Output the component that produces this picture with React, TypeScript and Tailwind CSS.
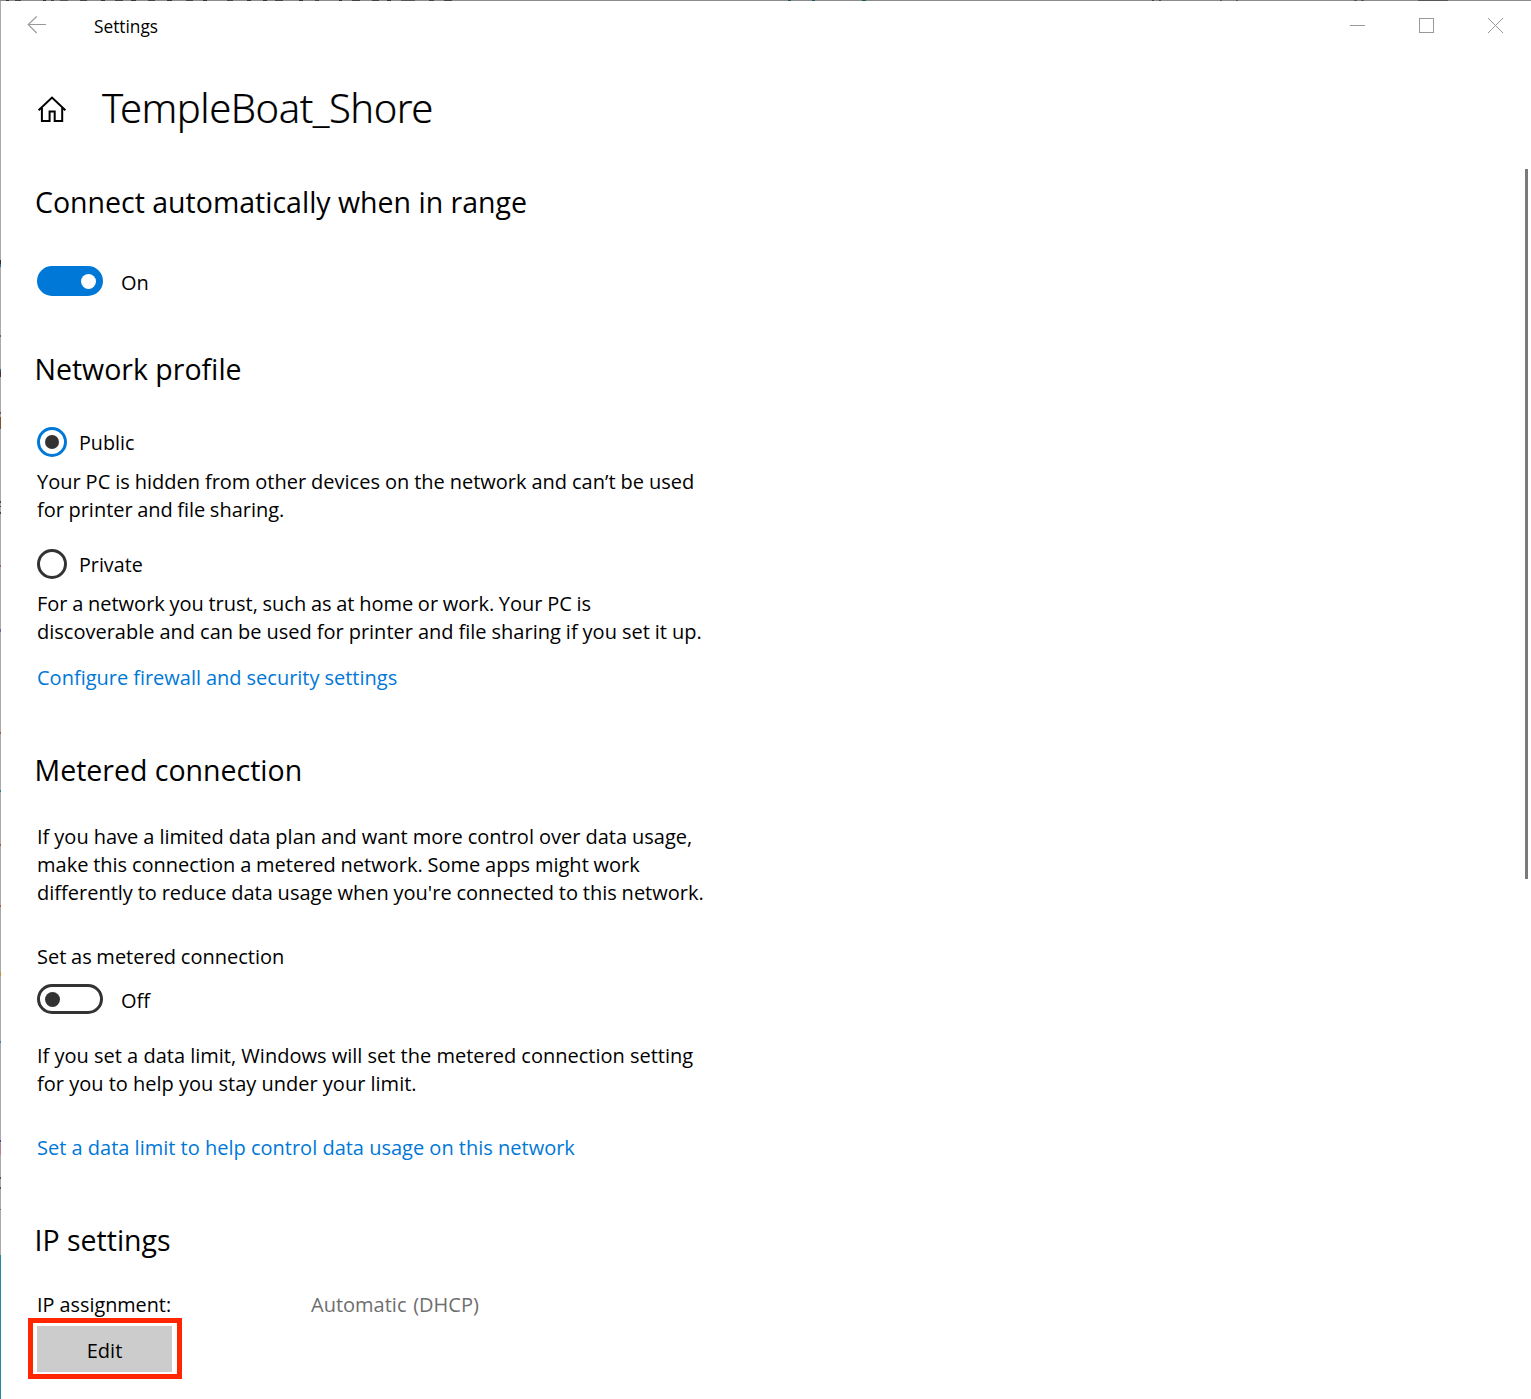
import React, { useState } from "react";

const body = "whitespace-nowrap text-[20px] leading-[28px]";

function Heading({ children, className }: { children: React.ReactNode; className: string }) {
  return <h2 className={`h-10 whitespace-nowrap text-[28.5px] leading-[40px] ${className}`}>{children}</h2>;
}

function Toggle({ on, onChange, label }: { on: boolean; onChange: () => void; label: string }) {
  return (
    <button
      role="switch"
      aria-checked={on}
      aria-label={label}
      onClick={onChange}
      className={`flex h-[30px] w-[66px] items-center rounded-full border-[3px] px-[5px] ${
        on ? "justify-end border-[#0078d7] bg-[#0078d7] pr-[4px]" : "justify-start border-[#333333] bg-white"
      }`}
    >
      <span className={`h-[15px] w-[15px] rounded-full ${on ? "bg-white" : "bg-[#333333]"}`} />
    </button>
  );
}

function Radio({ checked, onSelect, label }: { checked: boolean; onSelect: () => void; label: string }) {
  return (
    <button role="radio" aria-checked={checked} onClick={onSelect} className="flex h-[30px] items-center">
      <span
        className={`flex h-[30px] w-[30px] items-center justify-center rounded-full border-[3px] ${
          checked ? "border-[#0078d7]" : "border-[#333333]"
        }`}
      >
        {checked && <span className="h-[14px] w-[14px] rounded-full bg-[#333333]" />}
      </span>
      <span className="ml-3 mt-[2px] whitespace-nowrap text-[19.7px] leading-[28px]">{label}</span>
    </button>
  );
}

function TitleBar() {
  return (
    <header className="flex h-[50px] items-start">
      <svg className="ml-[26px] mt-[15px]" width="20" height="18" viewBox="0 0 20 18" fill="none" stroke="#999999" strokeWidth="1.1">
        <path d="M19 8.5H1.2M9.7 0.5L1.2 8.5L9.7 17" />
      </svg>
      <span className="ml-[47px] mt-[14px] text-[17.3px] leading-[24px]">Settings</span>
      <div className="ml-auto mr-[27px] mt-[16px] flex gap-[53px] text-[#999999]">
        <svg width="16" height="16" viewBox="0 0 16 16" stroke="currentColor" shapeRendering="crispEdges">
          <path d="M0 8.5H15" />
        </svg>
        <svg width="16" height="16" viewBox="0 0 16 16" fill="none" stroke="currentColor" shapeRendering="crispEdges">
          <path d="M0.5 1.5H14.5V15.5H0.5Z" />
        </svg>
        <svg width="16" height="16" viewBox="0 0 16 16" stroke="currentColor">
          <path d="M0 1L15 16M15 1L0 16" />
        </svg>
      </div>
    </header>
  );
}

/* Slivers of the desktop that show along the window's edge: [length of gap before, length, colour class] */
const topMarks: [number, number, string][] = [
  [6, 3, "bg-[#333]"], [6, 6, "bg-[#444]"], [22, 3, "bg-[#333]"], [5, 3, "bg-[#444]"], [6, 8, "bg-[#555]"],
  [12, 7, "bg-[#444]"], [14, 4, "bg-[#333]"], [10, 8, "bg-[#444]"], [8, 5, "bg-[#333]"], [12, 7, "bg-[#444]"],
  [12, 5, "bg-[#333]"], [14, 7, "bg-[#444]"], [10, 4, "bg-[#333]"], [20, 6, "bg-[#444]"], [14, 4, "bg-[#333]"],
  [12, 4, "bg-[#333]"], [8, 8, "bg-[#444]"], [16, 4, "bg-[#333]"], [12, 4, "bg-[#444]"], [20, 3, "bg-[#333]"],
  [10, 8, "bg-[#444]"], [12, 7, "bg-[#444]"], [8, 4, "bg-[#333]"], [10, 14, "bg-[#555]"], [14, 5, "bg-[#444]"], [10, 8, "bg-[#444]"],
  [336, 3, "bg-[#1d5560]"], [21, 3, "bg-[#1d5560]"], [47, 4, "bg-[#1d5560]"],
  [286, 2, "bg-[#445]"], [5, 2, "bg-[#445]"], [59, 2, "bg-[#555]"], [14, 2, "bg-[#555]"], [116, 3, "bg-[#555]"], [4, 3, "bg-[#555]"], [54, 30, "bg-[#555]"],
];
const leftMarks: [number, number, string][] = [
  [259, 4, "bg-[#2b3038]"], [0, 3, "bg-[#2b6aa8]"], [68, 2, "bg-[#7a5a40]"], [32, 2, "bg-[#38608c]"], [0, 6, "bg-[#503038]"],
  [35, 2, "bg-[#80503c]"], [3, 12, "bg-[#80502f]"], [72, 2, "bg-[#444]"], [3, 1, "bg-[#444]"], [5, 2, "bg-[#444]"],
  [51, 2, "bg-[#985a70]"], [62, 3, "bg-[#6a6aa0]"], [100, 2, "bg-[#a0603c]"], [56, 2, "bg-[#208090]"], [52, 2, "bg-[#a0603c]"],
  [59, 2, "bg-[#a0603c]"], [65, 4, "bg-[#c09040]"], [7, 2, "bg-[#b0a080]"], [56, 2, "bg-[#4a80b0]"],
  [97, 2, "bg-[#603090]"], [1, 12, "bg-[#b08098]"], [22, 2, "bg-[#386a38]"], [8, 2, "bg-[#386a38]"], [20, 1, "bg-[#666]"],
];

export default function App() {
  const [auto, setAuto] = useState(true);
  const [metered, setMetered] = useState(false);
  const [profile, setProfile] = useState("public");
  return (
    <div className="flex h-[1399px] w-[1531px] flex-col overflow-hidden bg-white font-['Open_Sans',sans-serif] text-black">
      <div className="flex h-px shrink-0 overflow-hidden bg-[#8c8c8c]">
        {topMarks.map(([gap, len, color], i) => (
          <span key={i} className={`h-px shrink-0 ${color}`} style={{ marginLeft: gap, width: len }} />
        ))}
      </div>
      <div className="flex min-h-0 flex-1">
        <div className="flex w-px shrink-0 flex-col">
          <div className="flex h-[1254px] flex-col overflow-hidden bg-[#aaaaaa]">
            {leftMarks.map(([gap, len, color], i) => (
              <span key={i} className={`w-px shrink-0 ${color}`} style={{ marginTop: gap, height: len }} />
            ))}
          </div>
          <div className="flex-1 bg-[#2787aa]" />
        </div>
        <div className="flex flex-1 flex-col">
          <TitleBar />
          <div className="flex min-h-0 flex-1">
            <main className="flex flex-1 flex-col items-start pl-[36px]">
              <div className="flex h-[60px] items-start pt-[29px]">
                <svg className="mt-[15px]" width="30" height="28" viewBox="0 0 30 28" fill="none" stroke="#000" strokeWidth="2">
                  <path d="M1.6 15.2L15 2.6L28.4 15.2M4.9 12.5V25.9H12.6V16.6H17.7V25.9H25.2V12.5" />
                </svg>
                <h1 className="ml-[35px] whitespace-nowrap font-['Noto_Sans',sans-serif] text-[40px] font-light leading-[56px] tracking-[-0.48px] [-webkit-text-stroke:0.2px_#000]">
                  TempleBoat_Shore
                </h1>
              </div>

              <Heading className="-ml-[2px] mt-[71px]">Connect automatically when in range</Heading>
              <div className="mt-[44px] flex h-[30px] items-center">
                <Toggle on={auto} onChange={() => setAuto(!auto)} label="Connect automatically" />
                <span className={`ml-[18px] mt-[3px] ${body}`}>{auto ? "On" : "Off"}</span>
              </div>

              <Heading className="-ml-[2.5px] mt-[53px]">Network profile</Heading>
              <div role="radiogroup" className="mt-[38px] flex flex-col items-start">
                <Radio checked={profile === "public"} onSelect={() => setProfile("public")} label="Public" />
                <p className={`mt-[11px] ${body}`}>
                  <span className="[word-spacing:-0.25px]">Your PC is hidden from other devices on the network and can’t be used</span>
                  <br />
                  <span className="[word-spacing:-0.7px]">for printer and file sharing.</span>
                </p>
                <div className="h-[25px]" />
                <Radio checked={profile === "private"} onSelect={() => setProfile("private")} label="Private" />
                <p className={`mt-[11px] ${body}`}>
                  <span className="[word-spacing:-0.52px]">For a network you trust, such as at home or work. Your PC is</span>
                  <br />
                  <span className="[word-spacing:-0.2px]">discoverable and can be used for printer and file sharing if you set it up.</span>
                </p>
              </div>
              <a className={`mt-[18px] text-[#0078d7] [word-spacing:-0.25px] ${body}`}>Configure firewall and security settings</a>

              <Heading className="-ml-[2.5px] mt-[58px]">Metered connection</Heading>
              <p className={`mt-[33px] ${body}`}>
                <span className="[word-spacing:-0.17px]">If you have a limited data plan and want more control over data usage,</span>
                <br />
                <span className="[word-spacing:-0.4px]">make this connection a metered network. Some apps might work</span>
                <br />
                <span className="[word-spacing:-0.37px]">differently to reduce data usage when you're connected to this network.</span>
              </p>
              <p className={`mt-[36px] [word-spacing:-0.5px] ${body}`}>Set as metered connection</p>
              <div className="mt-[13px] flex h-[30px] items-center">
                <Toggle on={metered} onChange={() => setMetered(!metered)} label="Set as metered connection" />
                <span className={`ml-[18px] mt-[3px] ${body}`}>{metered ? "On" : "Off"}</span>
              </div>
              <p className={`mt-[28px] ${body}`}>
                If you set a data limit, Windows will set the metered connection setting
                <br />
                for you to help you stay under your limit.
              </p>
              <a className={`mt-[36px] text-[#0078d7] ${body}`}>Set a data limit to help control data usage on this network</a>

              <Heading className="-ml-[2.5px] mt-[58px]">IP settings</Heading>
              <div className={`mt-[31px] flex ${body}`}>
                <span className="w-[274px] text-[19.8px]">IP assignment:</span>
                <span className="text-[#6e6e6e] [word-spacing:1.5px]">Automatic (DHCP)</span>
              </div>
              <div className="-ml-[9px] -mt-px border-[5px] border-[#ff2600] px-[4px] pb-[2px] pr-[5px] pt-[3px]">
                <button className="flex h-[46px] w-[135px] items-center justify-center bg-[#cccccc] pt-[4px] text-[20px] leading-[28px]">
                  Edit
                </button>
              </div>
            </main>
            <div className="mr-[3px] mt-[118px] h-[710px] w-[3px] bg-[#7a7a7a]" />
          </div>
        </div>
      </div>
    </div>
  );
}
